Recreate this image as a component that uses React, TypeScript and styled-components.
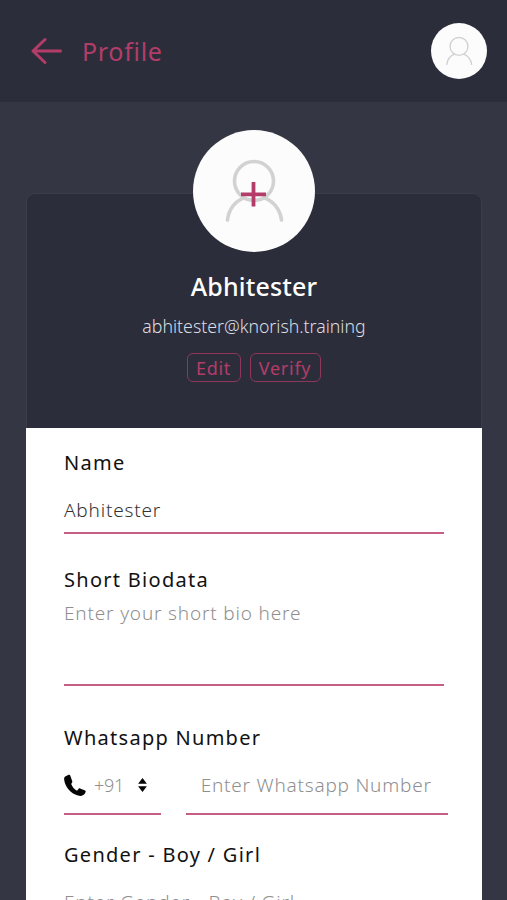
import React from "react";
import styled, { createGlobalStyle } from "styled-components";

const ACCENT = "#b33c68";

const GlobalStyle = createGlobalStyle`
  * { box-sizing: border-box; }
  html, body { margin: 0; height: 100%; overflow: hidden; }
  body { background: #343743; font-family: "Noto Sans", "Open Sans", sans-serif; }
`;

const Page = styled.div`
  height: 900px;
  overflow: hidden;
  background: #343743;
`;

const Header = styled.header`
  display: flex;
  align-items: center;
  height: 102px;
  padding: 0 20px 0 30px;
  background: #2b2e3a;
`;

const BackIcon = styled.svg`
  width: 33px;
  height: 28px;
  margin-right: 19px;
`;

const Title = styled.h1`
  flex: 1;
  margin: 0;
  font-size: 25px;
  line-height: 36px;
  font-weight: 450;
  letter-spacing: 0.7px;
  color: ${ACCENT};
`;

const Avatar = styled.div<{ $size: number }>`
  flex: none;
  width: ${(p) => p.$size}px;
  height: ${(p) => p.$size}px;
  border-radius: 50%;
  background: #fcfcfc;
  overflow: hidden;
  svg { display: block; width: 100%; height: 100%; }
`;

const Card = styled.main`
  width: 456px;
  margin: 91px 25px 0 26px;
`;

const Summary = styled.section`
  display: flex;
  flex-direction: column;
  align-items: center;
  height: 235px;
  border: 1px solid #3b3d49;
  border-bottom: 0;
  border-radius: 9px 9px 0 0;
  background: #2b2e3a;

  > ${Avatar} { margin-top: -64px; }
`;

const UserName = styled.h2`
  margin: 16px 0 0;
  font-size: 25px;
  line-height: 36px;
  font-weight: 500;
  letter-spacing: 0.15px;
  color: #fff;
`;

const Email = styled.p`
  margin: 7px 0 0;
  font-size: 17.7px;
  line-height: 30px;
  font-weight: 300;
  color: #dcdde3;
`;

const Actions = styled.div`
  display: flex;
  gap: 9px;
  margin-top: 12px;
`;

const ActionButton = styled.button<{ $width: number }>`
  width: ${(p) => p.$width}px;
  height: 29px;
  padding: 1px 1px 0 0;
  border: 1px solid #8f365a;
  border-radius: 6px;
  background: transparent;
  color: ${ACCENT};
  font: 400 18px/27px "Noto Sans", sans-serif;
  letter-spacing: 0.75px;
`;

const Form = styled.section`
  height: 480px;
  padding: 20px 34px 0 38px;
  background: #fff;
`;

const Label = styled.div<{ $top?: number }>`
  margin-top: ${(p) => p.$top ?? 0}px;
  height: 30px;
  font-size: 20px;
  line-height: 30px;
  letter-spacing: 1.28px;
  color: #111;
  white-space: nowrap;
`;

const Field = styled.div<{ $top: number; $height: number; $value?: boolean }>`
  width: 380px;
  margin-top: ${(p) => p.$top}px;
  height: ${(p) => p.$height}px;
  border-bottom: 2px solid #c65d84;
  font-size: 19px;
  line-height: 30px;
  font-weight: ${(p) => (p.$value ? 350 : 300)};
  letter-spacing: 0.82px;
  color: ${(p) => (p.$value ? "#333" : "#8f8f8f")};
  white-space: nowrap;
`;

const PhoneRow = styled.div`
  display: flex;
  gap: 25px;
  margin-top: 17px;
`;

const CodeField = styled(Field)`
  display: flex;
  width: 97px;
  font-size: 18px;
  letter-spacing: -0.3px;

  > svg { flex: none; }
`;

const Code = styled.span`
  width: 44px;
  margin-left: 8px;
`;

const NumberField = styled(Field)`
  width: 263px;
  padding-left: 15px;
  letter-spacing: 0.78px;
`;

const PhoneIcon = styled.svg`
  width: 22px;
  height: 23px;
  margin-top: 4px;
`;

const SortIcon = styled.svg`
  width: 9px;
  height: 14px;
  margin-top: 8px;
`;

const Person = ({ stroke }: { stroke: number }) => (
  <g fill="none" stroke="#d2d2d2" strokeWidth={stroke} strokeLinecap="round">
    <circle cx="61" cy="51" r="19.5" />
    <path d="M34.5 90C36 78 43 71 51 67.8M71 67.8C80 71 87 79 88.5 90" />
  </g>
);

export default function App() {
  return (
    <Page>
      <GlobalStyle />
      <Header>
        <BackIcon viewBox="0 0 33 28" fill="none" stroke={ACCENT} strokeWidth="3" strokeLinecap="round" strokeLinejoin="round">
          <path d="M30.5 14H3M15 2.5 3 14l12 11.5" />
        </BackIcon>
        <Title>Profile</Title>
        <Avatar $size={56}>
          <svg viewBox="0 0 122 122"><Person stroke={3} /></svg>
        </Avatar>
      </Header>
      <Card>
        <Summary>
          <Avatar $size={122}>
            <svg viewBox="0 0 122 122">
              <Person stroke={3.6} />
              <path d="M48 64.3h25M60.5 52v24.5" stroke={ACCENT} strokeWidth="3.8" />
            </svg>
          </Avatar>
          <UserName>Abhitester</UserName>
          <Email>abhitester@knorish.training</Email>
          <Actions>
            <ActionButton $width={54}>Edit</ActionButton>
            <ActionButton $width={71}>Verify</ActionButton>
          </Actions>
        </Summary>
        <Form>
          <Label>Name</Label>
          <Field $top={17} $height={39} $value>Abhitester</Field>
          <Label $top={31}>Short Biodata</Label>
          <Field $top={3} $height={88}>Enter your short bio here</Field>
          <Label $top={37}>Whatsapp Number</Label>
          <PhoneRow>
            <CodeField $top={0} $height={45}>
              <PhoneIcon viewBox="0 0 22 23">
                <path d="M4.6.8 1.2 2.4C.3 2.900.1 4 .1 5.200 1 13.200 6.500 19.300 14 21.600c2 .6 3.600.5 5.200-.5 1.200-.8 2-2 2.500-3.400.1-.6-.1-1-.6-1.300l-5-2c-.6-.2-1-.1-1.400.3l-1.700 2C10.300 15.300 8.300 12.900 7.200 10l1-1.800c.2-.5.2-.8 0-1.300L6.200 1.500C5.900.8 5.300.5 4.600.8Z" fill="#050505" />
              </PhoneIcon>
              <Code>+91</Code>
              <SortIcon viewBox="0 0 9 14">
                <path d="M4.500 0 8.900 5.700H.1ZM.1 8.300h8.800L4.500 14Z" fill="#050505" />
              </SortIcon>
            </CodeField>
            <NumberField $top={0} $height={45}>Enter Whatsapp Number</NumberField>
          </PhoneRow>
          <Label $top={25}>Gender - Boy / Girl</Label>
          <Field $top={17} $height={39}>Enter Gender - Boy / Girl</Field>
        </Form>
      </Card>
    </Page>
  );
}
